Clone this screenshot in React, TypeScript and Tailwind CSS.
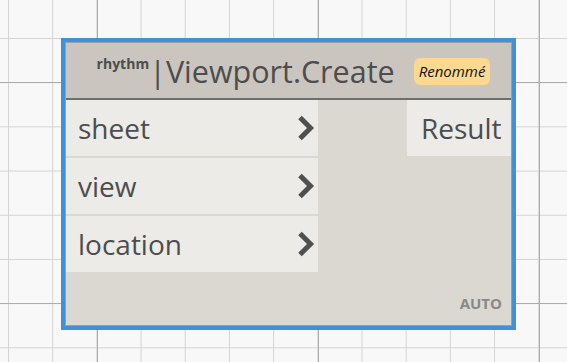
const font = "font-['Open_Sans',sans-serif]";

function Chevron() {
  return (
    <svg width="18" height="26" viewBox="0 0 18 26" className="shrink-0">
      <path d="M3 2.5 L13.5 13 L3 23.5" fill="none" stroke="#4f4f4f" strokeWidth="5" strokeLinejoin="miter" />
    </svg>
  );
}

function InPort({ name }: { name: string }) {
  return (
    <div className="flex h-14 items-center justify-between bg-[#edebe7] pl-3 pr-[3px]">
      <span className="text-[28px] leading-none text-[#4d4d4d]">{name}</span>
      <Chevron />
    </div>
  );
}

export default function App() {
  return (
    <div
      className={`h-[362px] w-[567px] overflow-hidden bg-[#f8f8f8] pl-[61px] pt-[38px] ${font} bg-[linear-gradient(to_right,#acacac_1px,transparent_1px),linear-gradient(to_bottom,#acacac_1px,transparent_1px),linear-gradient(to_right,#d4d4d4_1px,transparent_1px),linear-gradient(to_bottom,#d4d4d4_1px,transparent_1px)] bg-[size:221px_221px,221px_221px,44.2px_44.2px,44.2px_44.2px] bg-[position:97px_82px,97px_82px,8px_38px,8px_38px]`}
    >
      <div className="flex h-[292px] w-[455px] flex-col border-4 border-[#4191d9]">
        <div className="flex flex-1 flex-col border border-[#9e9e9e] bg-[#dbd8d1]">
          {/* header */}
          <div className="flex h-[57px] items-center justify-center gap-[19px] border-b-2 border-[#6e6e6e] bg-[#cac5be] pl-[10px]">
            <div className="flex items-start text-[#4d4d4d]">
              <span className="mt-[1px] text-[14px] font-bold leading-none">rhythm</span>
              <span className="text-[30.5px] leading-[30px]">|Viewport.Create</span>
            </div>
            <span className="mt-[1px] rounded-[6px] bg-[#fdd98f] px-[5px] py-[4px] text-[15px] italic leading-[19px] text-[#111111]">
              Renommé
            </span>
          </div>
          {/* body */}
          <div className="relative flex flex-1">
            <div className="flex w-[252px] flex-col gap-[2px]">
              <InPort name="sheet" />
              <InPort name="view" />
              <InPort name="location" />
            </div>
            <div className="flex flex-1 flex-col items-end">
              <div className="flex h-14 w-[104px] items-center bg-[#edebe7] pl-[14px]">
                <span className="text-[28px] leading-none text-[#4d4d4d]">Result</span>
              </div>
              <div className="mt-auto pb-[14px] pr-[9px] text-[15px] font-bold leading-none text-[#888888]">AUTO</div>
            </div>
          </div>
        </div>
      </div>
    </div>
  );
}
